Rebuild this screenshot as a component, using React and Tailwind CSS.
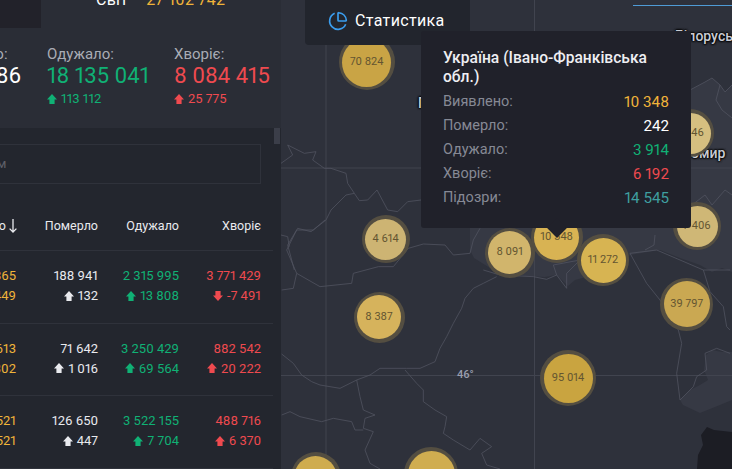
const stats = [
    { label: 'Померло:', value: '882 286', delta: '1 891', color: 'text-white', width: 'w-[107px]' },
    { label: 'Одужало:', value: '18 135 041', delta: '113 112', color: 'text-[#10b175]', width: 'w-[127px]' },
    { label: 'Хворіє:', value: '8 084 415', delta: '25 775', color: 'text-[#ef4a4f]', width: 'w-[107px]' },
];

const rows = [
    { total: ['6 276 365', '4 449'], dead: ['188 941', '132'], cured: ['2 315 995', '13 808'], sick: ['3 771 429', '-7 491'], sickDown: true },
    { total: ['4 204 613', '90 802'], dead: ['71 642', '1 016'], cured: ['3 250 429', '69 564'], sick: ['882 542', '20 222'] },
    { total: ['4 137 521', '14 521'], dead: ['126 650', '447'], cured: ['3 522 155', '7 704'], sick: ['488 716', '6 370'] },
];

const clusters = [
    { x: 366.7, y: 62, r: 28, fill: '#c9a445', label: '70 824' },
    { x: 690, y: 133, r: 24, fill: '#d6bf80', label: '5 446' },
    { x: 697, y: 226, r: 24, fill: '#cfb776', label: '7 406' },
    { x: 385.7, y: 239, r: 24, fill: '#cdb473', label: '4 614' },
    { x: 509.7, y: 252.7, r: 25, fill: '#d1b56c', label: '8 091' },
    { x: 556.7, y: 237, r: 26, fill: '#d8b353', label: '10 348' },
    { x: 603, y: 260, r: 26, fill: '#d7b452', label: '11 272' },
    { x: 686.7, y: 304, r: 26.5, fill: '#caa852', label: '39 797' },
    { x: 379, y: 317, r: 25.5, fill: '#d6b35c', label: '8 387' },
    { x: 568, y: 378, r: 28, fill: '#c9a440', label: '95 014' },
    { x: 315.7, y: 477, r: 25, fill: '#cfac4f', label: '' },
    { x: 431, y: 474, r: 27, fill: '#d0ad50', label: '' },
];

const tooltipRows = [
    ['Виявлено:', '10 348', 'text-[#f0b43a]'],
    ['Померло:', '242', 'text-white'],
    ['Одужало:', '3 914', 'text-[#10b175]'],
    ['Хворіє:', '6 192', 'text-[#ef4a4f]'],
    ['Підозри:', '14 545', 'text-[#3f9fa0]'],
];

// border traces, in two local grids of the map
const lower = pts => pts.map(([x, y]) => `${280 + x / 3},${220 + y / 3}`).join(' ');
const upper = pts => pts.map(([x, y]) => `${281 + x / 3},${130 + y / 3}`).join(' ');

const borders = [
    lower([[650, 170], [610, 190], [580, 205], [555, 235], [545, 265], [520, 310], [500, 350], [480, 385], [465, 425], [420, 445], [380, 445], [300, 445], [270, 465], [230, 480], [180, 505], [120, 495], [95, 485], [65, 465], [40, 430], [5, 402]]),
    lower([[375, 450], [410, 490], [430, 510], [430, 545], [465, 570], [500, 590], [495, 620], [490, 640], [520, 660], [570, 690], [600, 655], [635, 680], [605, 700], [620, 735], [660, 747]]),
    lower([[230, 480], [240, 530], [250, 570], [285, 585], [255, 595], [250, 625], [280, 635], [255, 690], [270, 730], [300, 747]]),
    lower([[5, 585], [30, 575], [60, 590], [125, 605], [160, 595], [215, 605], [225, 630], [250, 630]]),
    lower([[570, 100], [520, 105], [495, 75], [430, 72], [385, 85], [340, 140], [295, 140], [220, 160], [215, 190], [120, 200], [50, 160], [40, 205], [5, 210]]),
    lower([[50, 160], [20, 90], [50, 30], [100, 30], [135, 0]]),
    lower([[570, 100], [580, 60], [600, 25]]),
    lower([[1050, 100], [1100, 190], [1140, 240], [1195, 330], [1205, 370], [1190, 460], [1200, 540], [1240, 500], [1250, 470], [1280, 450], [1275, 400], [1310, 385], [1350, 400]]),
    lower([[860, 205], [860, 160], [900, 120], [820, 135], [830, 165], [860, 205]]),
    lower([[1050, 100], [1130, 90], [1200, 120], [1270, 150], [1350, 150]]),
    lower([[1270, 150], [1290, 215], [1330, 260], [1340, 320], [1350, 330]]),
    lower([[610, 150], [660, 165], [760, 170], [800, 178], [830, 165]]),
    upper([[0, 100], [35, 75], [20, 45], [70, 70], [105, 65], [95, 90], [130, 115], [150, 115], [195, 130], [200, 160], [220, 190], [195, 195], [150, 240], [135, 270], [90, 305], [50, 295], [20, 345], [40, 420]]),
    upper([[220, 190], [235, 212], [260, 210], [288, 180], [320, 240], [350, 245], [380, 215], [420, 210]]),
    upper([[0, 315], [20, 320], [25, 350]]),
    '690,90 705,82 712,78 720,85 725,92 732,85',
    '720,85 716,100 722,110 732,118',
    '692,205 705,195 712,205 725,190 732,195',
    '655,235 654,245 645,250',
];

function Arrow({ down }) {
    return (
        <svg viewBox="0 0 10 10" className={`h-[10px] w-[10px] shrink-0 fill-current ${down ? 'rotate-180' : ''}`}>
            <path d="M5 0 10 5.500H7.600V10H2.400V5.500H0Z" />
        </svg>
    );
}

function Cell({ values, color, width, down, hideArrow }) {
    return (
        <div className={`${width} shrink-0 flex flex-col items-end gap-[7px] text-[13px] leading-[13px] ${color}`}>
            <span className="whitespace-nowrap">{values[0]}</span>
            <span className="flex items-center gap-[4px] whitespace-nowrap">
                {!hideArrow && <Arrow down={down} />}
                {values[1]}
            </span>
        </div>
    );
}

function Sidebar() {
    return (
        <aside className="w-[281px] h-full shrink-0 overflow-hidden bg-[#23262e] flex flex-col relative">
            <div className="h-[128px] shrink-0 bg-[#2a2d36]">
                <div className="flex h-[28px]">
                    <div className="w-[41px] h-full bg-[#22222a]" />
                    <div className="ml-[55px] -mt-[10px] flex gap-[18px] text-[16px] leading-[20px] tracking-[0.25px] h-[20px] whitespace-nowrap">
                        <span className="text-white">Світ</span>
                        <span className="text-[#f0b43a]">27 102 742</span>
                    </div>
                </div>
                <div className="flex justify-end mt-[16px] w-[281px]">
                    {stats.map(s => (
                        <div key={s.label} className={`${s.width} shrink-0 flex flex-col`}>
                            <span className="text-[15px] leading-[20px] text-[#a9acb5]">{s.label}</span>
                            <span className={`text-[22px] leading-[26px] -mt-[1px] whitespace-nowrap ${s.color}`}>{s.value}</span>
                            <span className={`flex items-center gap-[4px] mt-[3px] text-[13px] leading-[14px] ${s.color}`}>
                                <Arrow />
                                {s.delta}
                            </span>
                        </div>
                    ))}
                </div>
            </div>

            <div className="absolute right-[1px] top-[128px] w-[6px] h-[16px] bg-[#3b3e49]" />

            <div className="w-[273px] flex flex-col">
                <div className="mt-[16px] h-[40px] mr-[12px] -ml-[120px] border border-[#2f323b] flex items-center pl-[10px]">
                    <span className="text-[13px] text-[#5f6069] whitespace-nowrap">Пошук за регіоном</span>
                </div>
                <div className="mt-[34px] h-[33px] flex justify-end items-start pr-[12px] text-[12.500px] leading-[16px] text-[#e9eaee] border-b border-[#2f323b]">
                    <div className="w-[17px] shrink-0 flex items-center justify-end gap-[3px]">
                        <span className="whitespace-nowrap">о</span>
                        <svg viewBox="0 0 8 14" className="w-[8px] h-[14px] shrink-0 -mr-[1px] -mt-[1px]" fill="none" stroke="currentColor" strokeWidth="1.300">
                            <path d="M4 0V13M.6 9.600 4 13 7.400 9.600" />
                        </svg>
                    </div>
                    <div className="w-[82px] shrink-0 text-right">Померло</div>
                    <div className="w-[81px] shrink-0 text-right">Одужало</div>
                    <div className="w-[82px] shrink-0 text-right">Хворіє</div>
                </div>
                {rows.map((row, i) => (
                    <div key={i} className="h-[72.500px] pt-[18px] flex justify-end pr-[12px] border-b border-[#2f323b]">
                        <Cell values={row.total} color="text-[#f0b43a]" width="w-[17px]" hideArrow />
                        <Cell values={row.dead} color="text-[#e9eaee]" width="w-[82px]" />
                        <Cell values={row.cured} color="text-[#10b175]" width="w-[81px]" />
                        <Cell values={row.sick} color="text-[#ef4a4f]" width="w-[82px]" down={row.sickDown} />
                    </div>
                ))}
            </div>
        </aside>
    );
}

function Cluster({ x, y, r, fill, label }) {
    return (
        <div
            className="absolute rounded-full bg-[#544e41] flex items-center justify-center"
            style={{ left: x - 281 - r, top: y - r, width: r * 2, height: r * 2 }}
        >
            <div
                className="rounded-full flex items-center justify-center text-[11px] text-[#635531]"
                style={{ width: r * 2 - 7, height: r * 2 - 7, backgroundColor: fill }}
            >
                {label}
            </div>
        </div>
    );
}

function MapLabel({ className, children }) {
    return (
        <span className={`absolute whitespace-nowrap text-[14px] leading-[16px] font-medium text-[#c9ccd4] [text-shadow:0_0_2px_#000,0_0_2px_#000,0_0_2px_#000,0_0_3px_#000] ${className}`}>
            {children}
        </span>
    );
}

function WorldMap() {
    return (
        <main className="relative flex-1 h-full overflow-hidden bg-[#2e313b]">
            <svg viewBox="281 0 451 469" className="absolute inset-0 w-full h-full">
                <path d="M470 250 474 258 490 268 505 272 525 276 545 277 556 275 562 280 568 286 575 280 590 276 600 275 615 270 630 255 660 250 680 258 700 265 712 272 722 268 732 272V85L725 92 720 85 712 78 690 90H470Z" fill="#363944" />
                <path d="M706 355 712 350 722 352 732 352V400L720 405 700 413 683 405 680 400 690 390 700 385 708 380 704 370Z" fill="#363944" />
                <path d="M697 469 698 455 703 445 701 435 707 427 714 430 732 432V469Z" fill="#1c1d24" />
                <path d="M326 0V469M534.500 0V469M281 168H732M281 375.500H732" stroke="#41444f" strokeWidth="1" fill="none" />
                {borders.map((points, i) => (
                    <polyline key={i} points={points} fill="none" stroke="#50535f" strokeWidth="0.8" strokeLinejoin="round" />
                ))}
            </svg>

            <span className="absolute left-[176px] top-[368px] text-[11px] leading-[13px] font-medium text-[#9a9eaf]">46°</span>
            <MapLabel className="left-[394px] top-[28px]">Білорусь</MapLabel>
            <MapLabel className="left-[382px] top-[145px]">Житомир</MapLabel>
            <MapLabel className="left-[137px] top-[95px]">Польща</MapLabel>

            {clusters.map(c => (
                <Cluster key={c.x} {...c} />
            ))}

            <div className="absolute left-[352px] right-0 top-[5px] h-[1px] bg-[#4f9bd6]" />

            <div className="absolute left-[24px] top-0 w-[165px] h-[45px] bg-[#22252d] rounded-b-[4px] flex items-center pl-[23px] pb-[3px] gap-[7px] z-10">
                <svg viewBox="0 0 24 24" className="w-[20px] h-[20px] text-[#3b9dee]" fill="none" stroke="currentColor" strokeWidth="2">
                    <path d="M21 12c.552 0 1.005-.449.95-.998a10 10 0 0 0-8.953-8.951c-.55-.055-.998.398-.998.95v8a1 1 0 0 0 1 1z" />
                    <path d="M21.210 15.890A10 10 0 1 1 8 2.830" />
                </svg>
                <span className="text-[16px] tracking-[0.35px] text-white">Статистика</span>
            </div>

            <div className="absolute left-[140px] top-[31px] w-[270px] h-[197px] bg-[#20212a] rounded-[3px] px-[22px] pt-[18px] z-10">
                <div className="text-[15.600px] leading-[19px] font-medium text-[#eeeef2]">Україна (Івано-Франківська обл.)</div>
                <div className="mt-[3px]">
                    {tooltipRows.map(([name, value, color]) => (
                        <div key={name} className="h-[24px] flex items-center justify-between text-[14.500px]">
                            <span className="text-[#868995]">{name}</span>
                            <span className={`text-[15.200px] ${color}`}>{value}</span>
                        </div>
                    ))}
                </div>
                <div className="absolute left-[129px] -bottom-[7px] w-[14px] h-[14px] rotate-45 bg-[#20212a]" />
            </div>
        </main>
    );
}

export default function App() {
    return (
        <div className="w-[732px] h-[469px] overflow-hidden flex font-['Roboto',sans-serif] proportional-nums">
            <Sidebar />
            <WorldMap />
        </div>
    );
}
